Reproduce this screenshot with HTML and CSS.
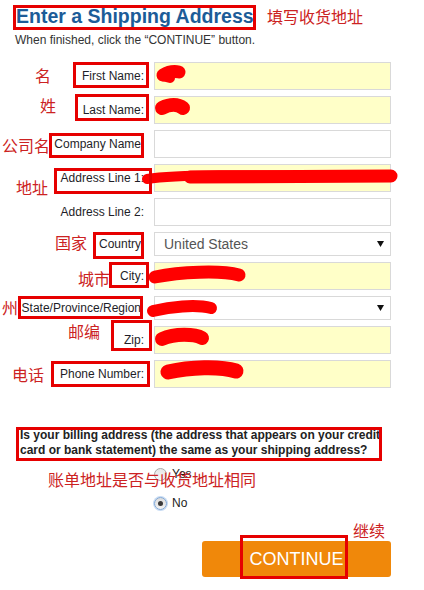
FILE: index.html
```html
<!DOCTYPE html>
<html lang="en">
<head>
<meta charset="utf-8">
<title>Enter a Shipping Address</title>
<link rel="stylesheet" href="styles.css">
</head>
<body>
<div class="page">
  <h1 class="title">Enter a Shipping Address</h1>
  <p class="subtitle">When finished, click the “CONTINUE” button.</p>

  <div class="form">
    <label class="lbl">First Name:</label>
    <input class="field yellow" type="text">
    <label class="lbl">Last Name:</label>
    <input class="field yellow" type="text">
    <label class="lbl nc">Company Name</label>
    <input class="field" type="text">
    <label class="lbl">Address Line 1:</label>
    <input class="field yellow" type="text">
    <label class="lbl">Address Line 2:</label>
    <input class="field" type="text">
    <label class="lbl nc">Country</label>
    <div class="select"><span class="select-text">United States</span><svg class="arrow" width="7" height="6" viewBox="0 0 7 6"><path d="M0 0H7L3.5 6Z" fill="#111"/></svg></div>
    <label class="lbl">City:</label>
    <input class="field yellow" type="text">
    <label class="lbl nc">State/Province/Region</label>
    <div class="select"><span class="select-text"></span><svg class="arrow" width="7" height="6" viewBox="0 0 7 6"><path d="M0 0H7L3.5 6Z" fill="#111"/></svg></div>
    <label class="lbl">Zip:</label>
    <input class="field yellow" type="text">
    <label class="lbl">Phone Number:</label>
    <input class="field yellow" type="text">
  </div>

  <p class="question">Is your billing address (the address that appears on your credit card or bank statement) the same as your shipping address?</p>

  <div class="radios">
    <div class="radio-row"><span class="radio"></span><span class="radio-label">Yes</span></div>
    <div class="radio-row"><span class="radio checked"></span><span class="radio-label">No</span></div>
  </div>

  <div class="actions"><button class="continue" type="button">CONTINUE</button></div>

  <svg class="scribbles" width="424" height="590" viewBox="0 0 424 590">
    <g fill="none" stroke="#ff0000" stroke-linecap="round" stroke-linejoin="round">
      <path d="M163 75 C168 72 174 71 179 72" stroke-width="13"/>
      <path d="M162 76 L170 78" stroke-width="10"/>
      <path d="M162 108 C170 104 178 104 183 108" stroke-width="14"/>
      <path d="M147 179 C180 174 250 175 392 176" stroke-width="10"/>
      <path d="M190 177 L391 176" stroke-width="13"/>
      <path d="M155 277 C180 272 220 270 239 275" stroke-width="13"/>
      <path d="M153 311 C170 307 195 304 211 308" stroke-width="12"/>
      <path d="M162 339 C175 333 195 334 202 338" stroke-width="14"/>
      <path d="M168 372 C190 367 220 366 236 371" stroke-width="15"/>
    </g>
  </svg>

  <div class="notes">
    <div class="box b-title"></div>
    <div class="box b-first"></div>
    <div class="box b-last"></div>
    <div class="box b-company"></div>
    <div class="box b-addr1"></div>
    <div class="box b-country"></div>
    <div class="box b-city"></div>
    <div class="box b-state"></div>
    <div class="box b-zip"></div>
    <div class="box b-phone"></div>
    <div class="box b-question"></div>
    <div class="box b-continue"></div>

    <span class="note n-title">填写收货地址</span>
    <span class="note n-first">名</span>
    <span class="note n-last">姓</span>
    <span class="note n-company">公司名</span>
    <span class="note n-addr">地址</span>
    <span class="note n-country">国家</span>
    <span class="note n-city">城市</span>
    <span class="note n-state">州</span>
    <span class="note n-zip">邮编</span>
    <span class="note n-phone">电话</span>
    <span class="note n-billing">账单地址是否与收货地址相同</span>
    <span class="note n-continue">继续</span>
  </div>
</div>
</body>
</html>
```

FILE: styles.css
```css
* { box-sizing: border-box; }

html, body {
  margin: 0;
  padding: 0;
  background: #ffffff;
}

body {
  font-family: "Liberation Sans", Arial, sans-serif;
  color: #222;
}

.page {
  position: relative;
  width: 424px;
  height: 590px;
  overflow: hidden;
}

.title {
  margin: 4px 0 0 0;
  padding-left: 16px;
  font-size: 19.5px;
  line-height: 24px;
  font-weight: bold;
  color: #1c5c98;
}

.subtitle {
  margin: 5px 0 0 0;
  padding-left: 15px;
  font-size: 12px;
  line-height: 14px;
  color: #333;
}

.form {
  display: grid;
  grid-template-columns: 146px 237px;
  column-gap: 8px;
  row-gap: 6px;
  align-items: center;
  margin-top: 15px;
}

.lbl {
  text-align: right;
  padding-right: 2px;
  font-size: 12px;
  line-height: 14px;
  color: #1e1e28;
  white-space: nowrap;
}

.lbl.nc { padding-right: 5px; }

.field {
  display: block;
  width: 237px;
  height: 28px;
  margin: 0;
  padding: 0 8px;
  border: 1px solid #d9d9d9;
  background: #ffffff;
  font: 14px "Liberation Sans", Arial, sans-serif;
  outline: none;
}

.field.yellow { background: #ffffc8; }

.select {
  display: flex;
  align-items: center;
  width: 237px;
  height: 24px;
  padding: 0 6px 0 9px;
  border: 1px solid #d9d9d9;
  background: #ffffff;
}

.select-text {
  font-size: 14px;
  line-height: 16px;
  color: #555;
}

.arrow {
  margin-left: auto;
  display: block;
}

.question {
  margin: 40px 0 0 0;
  padding-left: 20px;
  width: 386px;
  font-size: 12px;
  line-height: 15px;
  font-weight: bold;
  color: #222;
}

.radios {
  display: flex;
  flex-direction: column;
  gap: 15px;
  margin: 9px 0 0 154px;
}

.radio-row {
  display: flex;
  align-items: center;
  gap: 5px;
  height: 14px;
}

.radio {
  display: inline-flex;
  align-items: center;
  justify-content: center;
  width: 13px;
  height: 13px;
  border-radius: 50%;
  border: 1px solid #a9a9a9;
  background: linear-gradient(#e6e6e6, #f8f8f8);
}

.radio.checked {
  border-color: #7ea6d6;
  background: linear-gradient(#dcdcdc, #f2f2f2);
  box-shadow: 0 0 0 1px #c7dbf3;
}

.radio.checked::after {
  content: "";
  width: 5px;
  height: 5px;
  border-radius: 50%;
  background: #3a3a3a;
}

.radio-label {
  font-size: 12px;
  line-height: 14px;
  color: #222;
}

.actions {
  display: flex;
  margin: 31px 0 0 202px;
}

.continue {
  width: 189px;
  height: 36px;
  border: 0;
  border-radius: 3px;
  background: #f0880a;
  color: #ffffff;
  font: 18px "Liberation Sans", Arial, sans-serif;
  padding: 0;
}

/* annotation overlay */
.scribbles {
  position: absolute;
  left: 0;
  top: 0;
  pointer-events: none;
}

.notes {
  position: absolute;
  inset: 0;
  pointer-events: none;
}

.box {
  position: absolute;
  border: 3px solid #e60000;
}

.b-title    { left: 13px;  top: 5px;   width: 243px; height: 25px; }
.b-first    { left: 73px;  top: 62px;  width: 76px;  height: 26px; }
.b-last     { left: 75px;  top: 94px;  width: 74px;  height: 27px; }
.b-company  { left: 49px;  top: 133px; width: 95px;  height: 25px; }
.b-addr1    { left: 54px;  top: 168px; width: 98px;  height: 26px; }
.b-country  { left: 93px;  top: 232px; width: 51px;  height: 27px; }
.b-city     { left: 109px; top: 262px; width: 40px;  height: 26px; }
.b-state    { left: 18px;  top: 296px; width: 125px; height: 23px; }
.b-zip      { left: 111px; top: 320px; width: 41px;  height: 31px; }
.b-phone    { left: 51px;  top: 361px; width: 99px;  height: 26px; }
.b-question { left: 16px;  top: 427px; width: 366px; height: 34px; }
.b-continue { left: 240px; top: 535px; width: 108px; height: 44px; }

.note {
  position: absolute;
  font-family: "Noto Sans CJK SC", "Noto Sans", sans-serif;
  font-size: 16px;
  line-height: 16px;
  color: #cc2222;
  white-space: nowrap;
}

.n-title    { left: 267px; top: 8px; }
.n-first    { left: 35px;  top: 67px; }
.n-last     { left: 40px;  top: 97px; }
.n-company  { left: 2px;   top: 137px; }
.n-addr     { left: 16px;  top: 179px; }
.n-country  { left: 55px;  top: 234px; }
.n-city     { left: 78px;  top: 270px; }
.n-state    { left: 2px;   top: 299px; }
.n-zip      { left: 68px;  top: 323px; }
.n-phone    { left: 12px;  top: 366px; }
.n-billing  { left: 48px;  top: 471px; }
.n-continue { left: 353px; top: 522px; }
```
